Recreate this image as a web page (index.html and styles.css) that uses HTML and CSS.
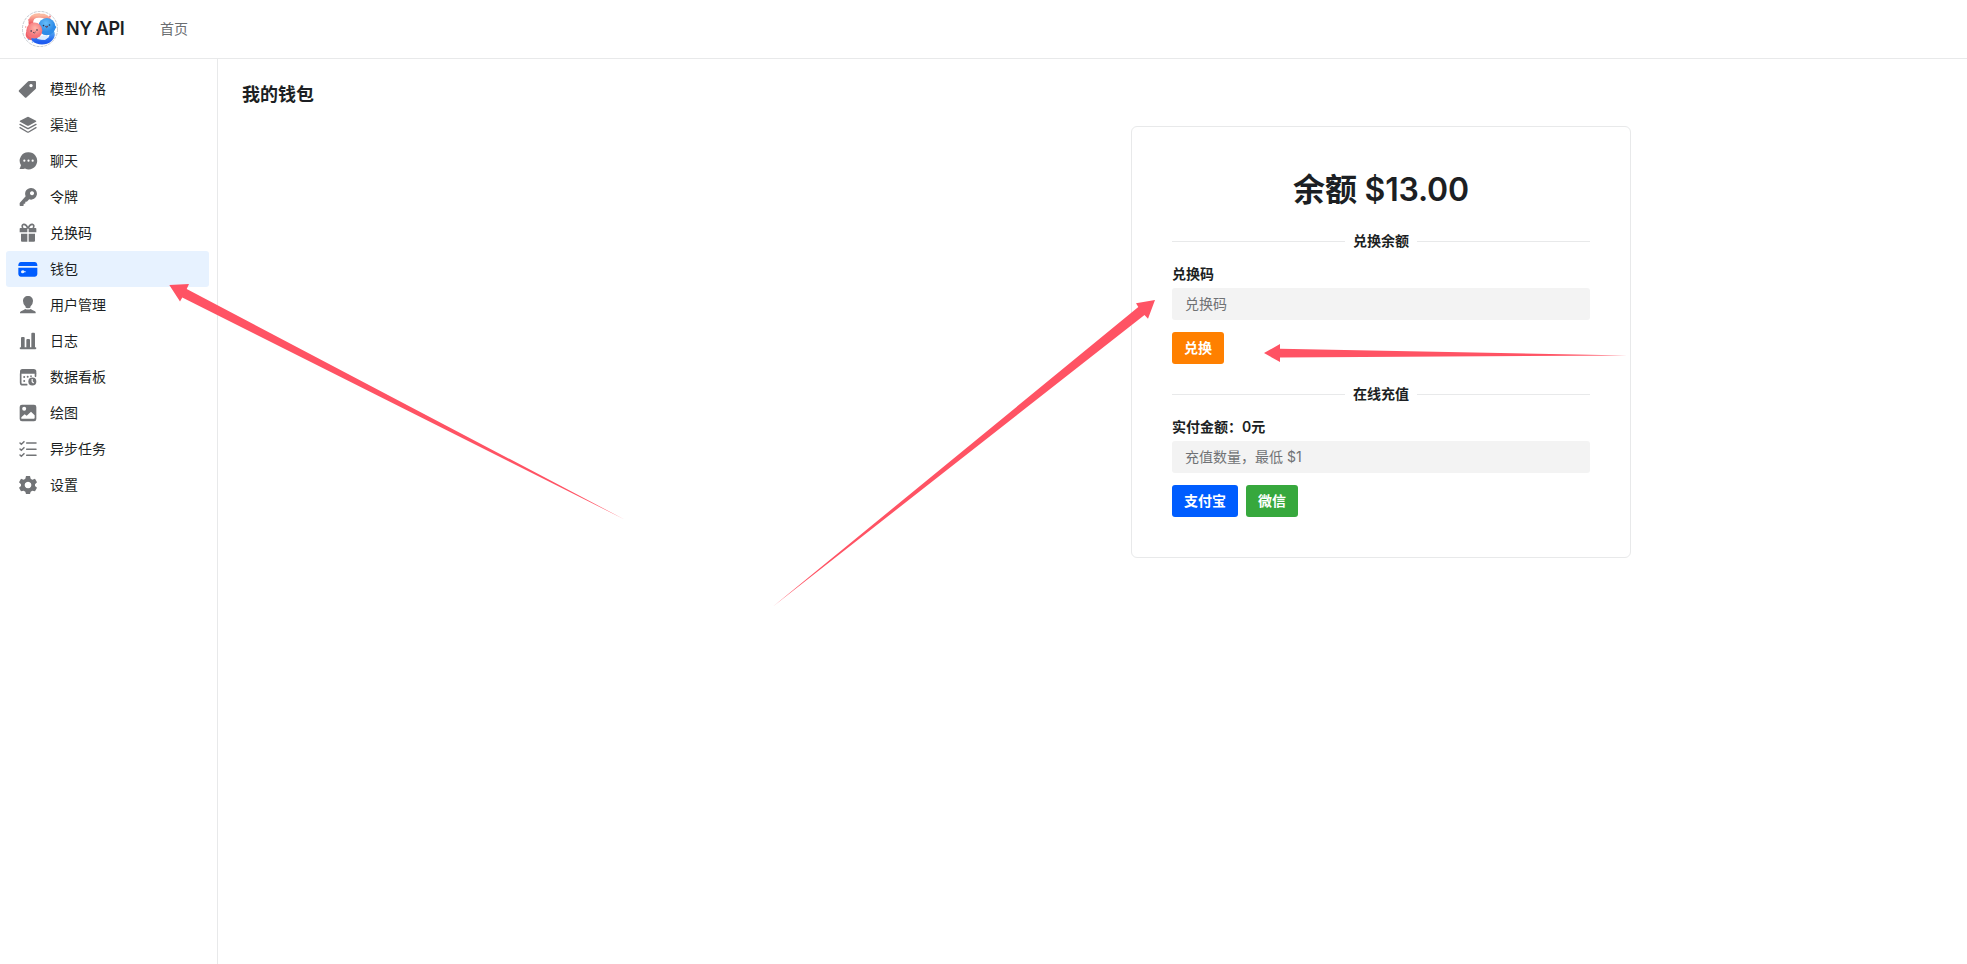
FILE: index.html
```html
<!DOCTYPE html>
<html lang="zh-CN">
<head>
<meta charset="utf-8">
<title>NY API</title>
<link rel="stylesheet" href="styles.css">
</head>
<body>
<header class="header">
  <svg class="logo" viewBox="0 0 36 36">
    <defs>
      <linearGradient id="ringRed" x1="0" y1="0" x2="0" y2="1"><stop offset="0" stop-color="#fbb9a0"/><stop offset="1" stop-color="#f0555f"/></linearGradient>
      <linearGradient id="ringBlue" x1="0" y1="0" x2="0" y2="1"><stop offset="0" stop-color="#4a9ff0"/><stop offset="1" stop-color="#1f5cf0"/></linearGradient>
      <radialGradient id="faceRed" cx=".55" cy=".35"><stop offset="0" stop-color="#ffb5aa"/><stop offset="1" stop-color="#f4747a"/></radialGradient>
      <radialGradient id="faceBlue" cx=".45" cy=".3"><stop offset="0" stop-color="#67bdf8"/><stop offset="1" stop-color="#2e8ce8"/></radialGradient>
    </defs>
    <circle cx="18" cy="18" r="17.6" fill="#fff" stroke="#b9bec4" stroke-width=".8" stroke-dasharray="3 1"/>
    <path d="M9 13C8 7 12 4 18 4.500c5 0 8 2 9 6" fill="none" stroke="url(#ringRed)" stroke-width="4.6" stroke-linecap="round"/>
    <path d="M6 22c-1 3 1 6 5 5" fill="none" stroke="#f0616a" stroke-width="4" stroke-linecap="round"/>
    <path d="M30 22c1 5-4 9-10 9-4 0-6-1-8-3" fill="none" stroke="url(#ringBlue)" stroke-width="5.2" stroke-linecap="round"/>
    <path d="M15 28c2-3 7-5 12-2l-4 3z" fill="#dcecff"/>
    <circle cx="24.800" cy="15.600" r="8.6" fill="url(#faceBlue)"/>
    <path d="M31 13l3.500 3-3.500 5z" fill="#2e8ce8"/>
    <circle cx="12.300" cy="19.500" r="8" fill="url(#faceRed)"/>
    <g fill="#27324a"><circle cx="9.200" cy="20" r=".8"/><circle cx="15" cy="19" r=".8"/><circle cx="21.500" cy="14.600" r=".8"/><circle cx="27.500" cy="14" r=".8"/></g>
    <path d="M11 21.300q1.500 1.500 2.600-.4" fill="none" stroke="#27324a" stroke-width=".7"/>
    <path d="M23.300 15.500q1.500 2.200 2.800-.3z" fill="#d84a5a" stroke="#27324a" stroke-width=".5"/>
    <g fill="#f5848a"><circle cx="7" cy="9" r=".9"/><circle cx="28" cy="5.500" r="1"/><circle cx="3.700" cy="16" r=".7"/></g>
    <g fill="#7ca8f8"><circle cx="6.500" cy="28.500" r=".7"/><circle cx="10.500" cy="31" r=".8"/><circle cx="32.500" cy="24" r=".8"/></g>
  </svg>
  <span class="brand">NY API</span>
  <a class="nav-link">首页</a>
</header>

<div class="layout">
  <nav class="sidebar">
    <a class="item"><svg class="icon" viewBox="0 0 60 60"><path fill-rule="evenodd" d="M33 6H51Q54 6 54 9V27Q54 29 52 31L26 55Q23 58 20 55L3 38Q1 36 3 34L29 8Q31 6 33 6ZM39 15a5 5 0 1 0 .1 0Z"/></svg><span>模型价格</span></a>
    <a class="item"><svg class="icon" viewBox="0 0 60 60"><path d="M28 6Q30 5 32 6L54 17Q56 19 54 20L32 32Q30 33 28 32L6 20Q4 19 6 17Z"/><path class="line thin" d="M6 28L28 40Q30 41 32 40L54 28M6 38L28 51Q30 52 32 51L54 38"/></svg><span>渠道</span></a>
    <a class="item"><svg class="icon" viewBox="0 0 60 60"><path d="M32 4a25.500 25.500 0 1 1-11 48.500Q14 55 6 54Q4 53.500 6 51L9 43A25.500 25.500 0 0 1 32 4Z"/><g class="knock"><circle cx="19" cy="29" r="3.300"/><circle cx="31.500" cy="29" r="3.300"/><circle cx="44" cy="29" r="3.300"/></g></svg><span>聊天</span></a>
    <a class="item"><svg class="icon" viewBox="0 0 60 60"><path fill-rule="evenodd" d="M39.500 3a17.500 17.500 0 1 1-6 34L28 43Q27 44 25 44H22V48Q22 50 20 50H17V55Q17 57 15 57H7Q5 57 5 55V48L23 28A17.500 17.500 0 0 1 39.500 3ZM42 12.500a6 6 0 1 0 .1 0Z"/></svg><span>令牌</span></a>
    <a class="item"><svg class="icon" viewBox="0 0 60 60"><path class="line bow" d="M29 15Q24 3 17 4Q10 6 14 15M31 15Q36 3 43 4Q50 6 46 15"/><path d="M7 15H28V28H5V17Q5 15 7 15ZM32 15H53Q55 15 55 17V28H32ZM9 32H28V56H12Q9 56 9 53ZM32 32H51V53Q51 56 48 56H32Z"/></svg><span>兑换码</span></a>
    <a class="item active"><svg class="icon" viewBox="0 0 60 60"><path d="M8 9H51Q57 9 58 17V21H1V17Q2 9 8 9ZM1 26H58V46Q57 53 51 53H8Q2 53 1 46Z"/><path fill="#e7f2ff" d="M14 34q5 0 5 2.500h4v3.500h-4q-1 3-5 3q-5 0-5-4.500t5-4.500Z"/></svg><span>钱包</span></a>
    <a class="item"><svg class="icon" viewBox="0 0 60 60"><path d="M30 3C39 3 45 9 45 18Q45 29 37 35V41Q42 44 51 49Q54 51 53 55H6Q5 51 9 49Q18 44 23 41V35Q15 29 15 18C15 9 21 3 30 3Z"/><path class="line gap" d="M22 40Q30 43 38 40"/></svg><span>用户管理</span></a>
    <a class="item"><svg class="icon" viewBox="0 0 60 60"><rect x="9" y="18" width="11" height="34" rx="3"/><rect x="25" y="24" width="11" height="28" rx="3"/><rect x="40" y="5" width="11" height="47" rx="3"/><rect x="5" y="49" width="50" height="5.500" rx="2.500"/></svg><span>日志</span></a>
    <a class="item"><svg class="icon" viewBox="0 0 60 60"><path class="line board" d="M8 20V47Q8 53 14 53H26M52.500 20V28"/><path d="M13 6H47Q55 6 55 14V20H6V14Q6 6 13 6Z"/><circle cx="18.500" cy="30" r="3"/><circle cx="29" cy="29" r="3"/><circle cx="18.500" cy="42" r="3"/><circle cx="39" cy="27.500" r="2.500"/><circle cx="43" cy="43.500" r="12"/><path d="M42.500 36V44L47 48" fill="none" stroke="#fff" stroke-width="3.500"/></svg><span>数据看板</span></a>
    <a class="item"><svg class="icon" viewBox="0 0 60 60"><rect x="5" y="5" width="50" height="50" rx="7"/><g class="knock"><circle cx="18.500" cy="17.500" r="6"/><path d="M10 47V43L20 34L26 38L39 26L50 37V44Q50 47 47 47Z"/></g></svg><span>绘图</span></a>
    <a class="item"><svg class="icon" viewBox="0 0 60 60"><path class="line" d="M26 12H54M26 31H54M26 49H54M6 12L10 16L18 8M6 30L10 34L18 26M6 48L10 52L18 44"/></svg><span>异步任务</span></a>
    <a class="item"><svg class="icon" viewBox="0 0 60 60"><path fill-rule="evenodd" d="M24 3H36L38 11L43 14L51 11L57 22L51 28V33L57 38L51 49L43 47L38 50L36 57H24L22 50L17 47L9 49L3 38L9 33V28L3 22L9 11L17 14L22 11ZM30 20a10 10 0 1 0 .1 0Z"/></svg><span>设置</span></a>
  </nav>

  <main class="main">
    <h1 class="title">我的钱包</h1>
    <section class="card">
      <h2 class="balance">余额 $13.00</h2>
      <div class="divider"><span>兑换余额</span></div>
      <label class="label">兑换码</label>
      <input class="input" type="text" placeholder="兑换码">
      <div class="actions"><button class="btn orange">兑换</button></div>
      <div class="divider"><span>在线充值</span></div>
      <label class="label">实付金额：0元</label>
      <input class="input" type="text" placeholder="充值数量，最低 $1">
      <div class="actions"><button class="btn blue">支付宝</button><button class="btn green">微信</button></div>
    </section>
  </main>
</div>

<svg class="arrows" viewBox="0 0 1967 964">
  <path d="M169.300 285L189 284L186.700 289L625 519.700L182.300 297.500L180 301.500Z"/>
  <path d="M1155 300L1148 318.700L1144.500 315L773 606.500L1138.300 307L1136 303.200Z"/>
  <path d="M1264 353L1280 344V348.700L1627 355.500L1280 357.500V362Z"/>
</svg>
</body>
</html>
```
FILE: styles.css
```css
* { box-sizing: border-box; }

body {
  margin: 0;
  height: 964px;
  overflow: hidden;
  display: flex;
  flex-direction: column;
  background: #fff;
  color: #1c1f23;
  font: 14px/20px Inter, "Noto Sans CJK SC", sans-serif;
}

.header {
  flex: none;
  display: flex;
  align-items: center;
  height: 59px;
  padding-left: 22px;
  border-bottom: 1px solid #e8e9ea;
}

.logo { width: 36px; height: 36px; margin-right: 8px; }
.brand { width: 94px; font-size: 18px; font-weight: 600; letter-spacing: -0.4px; white-space: nowrap; }
.nav-link { color: #6b6e71; }

.layout { flex: 1; display: flex; min-height: 0; }

.sidebar {
  flex: none;
  width: 218px;
  padding: 12px 8px 0 6px;
  border-right: 1px solid #e8e9ea;
}

.item {
  display: flex;
  align-items: center;
  gap: 12px;
  height: 36px;
  padding-left: 12px;
  border-radius: 3px;
}

.item.active { background: #e7f2ff; }

.icon { flex: none; width: 20px; height: 20px; fill: #727477; }
.active .icon { fill: #005dff; }
.icon .line { fill: none; stroke: #727477; stroke-width: 4.5; stroke-linecap: round; stroke-linejoin: round; }
.icon .thin { stroke-width: 4; }
.icon .bow, .icon .board { stroke-width: 5; }
.icon .gap { stroke: #fff; stroke-width: 4; }
.icon .knock { fill: #fff; }

.main { flex: 1; padding: 24px 24px; }

.title { margin: 0 0 19px; font-size: 18px; line-height: 24px; font-weight: 600; }

.card {
  width: 500px;
  margin-left: 889px;
  padding: 40px;
  border: 1px solid #e8e9ea;
  border-radius: 6px;
}

.balance { margin: 0; padding-top: 2px; font-size: 32px; line-height: 42px; font-weight: 600; letter-spacing: -0.2px; text-align: center; }

.divider {
  display: flex;
  align-items: center;
  gap: 8px;
  height: 20px;
  margin: 20px 0 13px;
  font-weight: 600;
}

.divider::before, .divider::after { content: ""; flex: 1; height: 1px; background: #e8e9ea; }

.label { display: block; margin-bottom: 4px; font-weight: 600; }

.input {
  display: block;
  width: 100%;
  height: 32px;
  padding: 0 13px 2px;
  border: 0;
  border-radius: 3px;
  background: #f3f3f3;
  font: inherit;
}

.input::placeholder { color: #707275; opacity: 1; }

.actions { display: flex; gap: 8px; margin-top: 12px; }

.btn {
  height: 32px;
  padding: 0 12px;
  border: 0;
  border-radius: 3px;
  color: #fff;
  font: inherit;
  font-weight: 600;
}

.orange { background: #ff8000; }
.blue { background: #005dff; }
.green { background: #37a83d; }

.arrows {
  position: absolute;
  inset: 0;
  width: 1967px;
  height: 964px;
  fill: #ff5364;
  pointer-events: none;
}
```
